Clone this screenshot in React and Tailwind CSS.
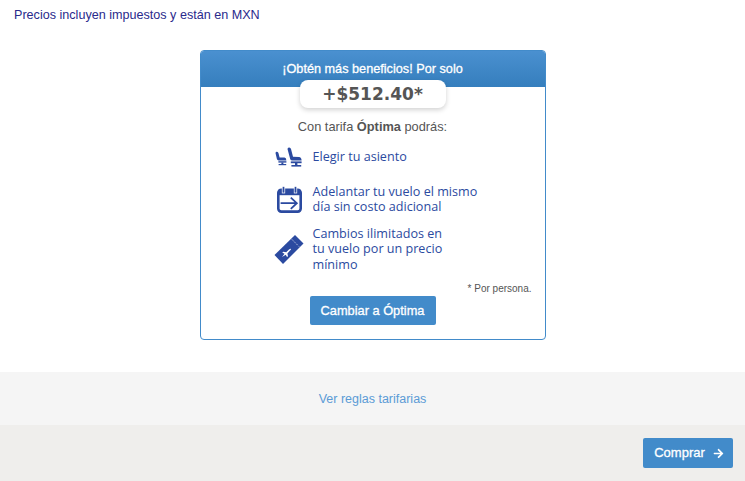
import { FaArrowRight } from "react-icons/fa";

const SeatsIcon = () => (
  <svg width="27" height="20" viewBox="0 0 27 20" fill="#2b4aa0">
    <path d="M0.5 6 Q0.8 4.6 2 4.8 Q3.2 5 3.5 6.2 L4.6 10.4 L9.5 10.6 Q11.2 10.8 11.4 13.4 L3.6 13.4 Q2.3 13.4 1.9 12 Z" />
    <rect x="3.4" y="14.2" width="8" height="1.4" />
    <rect x="6.4" y="15.4" width="2" height="2" />
    <rect x="3.6" y="17" width="7.6" height="1.2" />
    <path d="M12.5 2 Q12.7 0.2 14.2 0.4 Q15.6 0.6 16 2 L18 9.8 L24 10 Q26.4 10.2 26.6 13.6 L17.2 13.6 Q15.6 13.6 15.2 12 Z" />
    <rect x="15.8" y="14.4" width="10.8" height="1.8" />
    <rect x="20" y="16" width="2.4" height="2.2" />
    <rect x="16.4" y="18" width="9.8" height="1.6" />
  </svg>
);

const CalendarIcon = () => (
  <svg width="25" height="27" viewBox="0 0 25 27" fill="none">
    <rect x="1.3" y="3.8" width="22.4" height="21.8" rx="3" stroke="#2b4aa0" strokeWidth="2.6" />
    <rect x="1.3" y="3.8" width="22.4" height="5.4" fill="#2b4aa0" />
    <rect x="5.2" y="0.4" width="2.6" height="6.6" fill="#2b4aa0" stroke="#fff" strokeWidth="0.7" />
    <rect x="17.2" y="0.4" width="2.6" height="6.6" fill="#2b4aa0" stroke="#fff" strokeWidth="0.7" />
    <path d="M3.6 17.2 L19.5 17.2 M13.8 11.6 L19.8 17.2 L13.8 22.8" stroke="#2b4aa0" strokeWidth="1.8" />
  </svg>
);

const TicketIcon = () => (
  <svg width="30" height="32" viewBox="0 0 30 32">
    <path d="M0.5 22 L21 2 L29.5 10.5 L9 31 Z" fill="#2b4aa0" />
    <path d="M18 6.5 L25 13.5" stroke="#fff" strokeWidth="0.8" strokeDasharray="1.5 1.5" />
    {/* plane */}
    <path
      d="M8 24 L10.5 20.8 L8.2 19.6 L9.4 18.8 L12.2 19.2 L15 16.4 Q16.4 15.4 16.8 15.8 Q17.2 16.4 16 17.6 L13.4 20.4 L14 23.2 L13 24 L11.8 21.8 Z"
      fill="#fff"
    />
  </svg>
);

const benefits = [
  { icon: <SeatsIcon />, lines: ["Elegir tu asiento"], h: "h-[20px]", mb: "mb-[17px]", pl: "pl-[1px]" },
  { icon: <CalendarIcon />, lines: ["Adelantar tu vuelo el mismo", "día sin costo adicional"], h: "h-[30px]", mb: "mb-[12px]", pl: "pl-[3px]" },
  { icon: <TicketIcon />, lines: ["Cambios ilimitados en", "tu vuelo por un precio", "mínimo"], h: "h-[46px]", mb: "", pl: "" },
];

export default function App() {
  return (
    <div className="flex h-[481px] w-[745px] flex-col overflow-hidden bg-white font-['Liberation_Sans',sans-serif]">
      <p className="px-[14px] pt-[7px] text-[12.6px] leading-[16px] text-[#2a2a8c]">
        Precios incluyen impuestos y están en MXN
      </p>

      <div className="mx-auto mt-[27px] h-[290px] w-[346px] rounded-[4px] border border-[#428bca] bg-white">
        <div className="h-[36px] rounded-t-[3px] bg-gradient-to-b from-[#4a90d0] to-[#357ebd] pt-[10px] text-center text-[12.7px] leading-[16px] text-white [-webkit-text-stroke:0.3px_white]">
          ¡Obtén más beneficios! Por solo
        </div>
        <div className="relative z-10 mx-auto -mt-[7px] h-[28px] w-[146px] rounded-[8px] bg-white text-center font-['DejaVu_Sans',sans-serif] text-[17px] font-bold leading-[28px] text-[#555] shadow-[0_2px_5px_rgba(0,0,0,0.18)]">
          +$512.40*
        </div>

        <p className="mt-[11px] text-center text-[12.8px] leading-[16px] text-[#555]">
          Con tarifa <span className="font-bold">Óptima</span> podrás:
        </p>

        <div className="ml-[73px] mt-[12px]">
          {benefits.map((b) => (
            <div key={b.lines[0]} className={`flex items-center ${b.h} ${b.mb}`}>
              <div className={`flex w-[39px] shrink-0 justify-start ${b.pl}`}>{b.icon}</div>
              <div className="font-['Open_Sans',sans-serif] text-[12.6px] leading-[15.5px] text-[#2b4aa0]">
                {b.lines.map((l) => (
                  <div key={l}>{l}</div>
                ))}
              </div>
            </div>
          ))}
        </div>

        <p className="mt-[10px] pr-[13px] text-right text-[10px] leading-[14px] text-[#555]">* Por persona.</p>

        <button className="mx-auto block h-[29px] w-[126px] rounded-[2px] bg-[#428bca] text-[12.8px] text-white [-webkit-text-stroke:0.3px_white]">
          Cambiar a Óptima
        </button>
      </div>

      <div className="mt-[32px] flex h-[53px] items-center justify-center bg-[#f5f5f5] pt-[1px] text-[12.5px] text-[#5b9bd5]">
        Ver reglas tarifarias
      </div>

      <div className="flex h-[56px] items-start justify-end bg-[#efeeec] pr-[12px] pt-[13px]">
        <button className="flex h-[30px] w-[90px] items-center justify-center gap-[8px] rounded-[2px] bg-[#428bca] pl-[2px] text-[13px] text-white [-webkit-text-stroke:0.3px_white]">
          Comprar <FaArrowRight className="text-[11px]" />
        </button>
      </div>
    </div>
  );
}
